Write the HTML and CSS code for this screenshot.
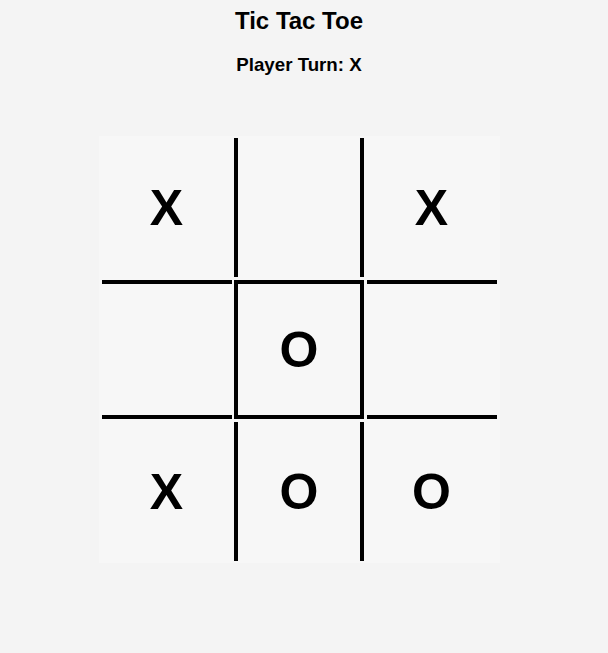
FILE: index.html
```html
<!DOCTYPE html>
<html lang="en">
<head>
<meta charset="utf-8">
<title>Tic Tac Toe</title>
<link rel="stylesheet" href="styles.css">
</head>
<body>
  <h2 class="title">Tic Tac Toe</h2>
  <h3 class="status">Player Turn: X</h3>
  <div class="board">
    <div class="cell">X</div>
    <div class="cell col-mid"></div>
    <div class="cell">X</div>
    <div class="cell row-mid"></div>
    <div class="cell col-mid row-mid">O</div>
    <div class="cell row-mid"></div>
    <div class="cell">X</div>
    <div class="cell col-mid">O</div>
    <div class="cell">O</div>
  </div>
</body>
</html>
```

FILE: styles.css
```css
html {
  background: #f4f4f4;
}

body {
  margin: 7px 10px 0 0;
  font-family: "Liberation Sans", Arial, sans-serif;
  color: #000;
  text-align: center;
}

.title {
  font-size: 24px;
  font-weight: bold;
  margin: 0 0 19px;
}

.status {
  font-size: 18.72px;
  font-weight: bold;
  margin: 0 0 60px;
}

.board {
  display: grid;
  grid-template-columns: repeat(3, 130px);
  grid-template-rows: repeat(3, 139px);
  gap: 3px 2.5px;
  padding: 2px 3px;
  width: max-content;
  margin: 0 auto;
  background: #f7f7f7;
}

.cell {
  box-sizing: border-box;
  display: flex;
  align-items: center;
  justify-content: center;
  font-size: 50px;
  font-weight: bold;
}

.col-mid {
  border-left: 4px solid #000;
  border-right: 4px solid #000;
}

.row-mid {
  border-top: 4px solid #000;
  border-bottom: 4px solid #000;
}
```
